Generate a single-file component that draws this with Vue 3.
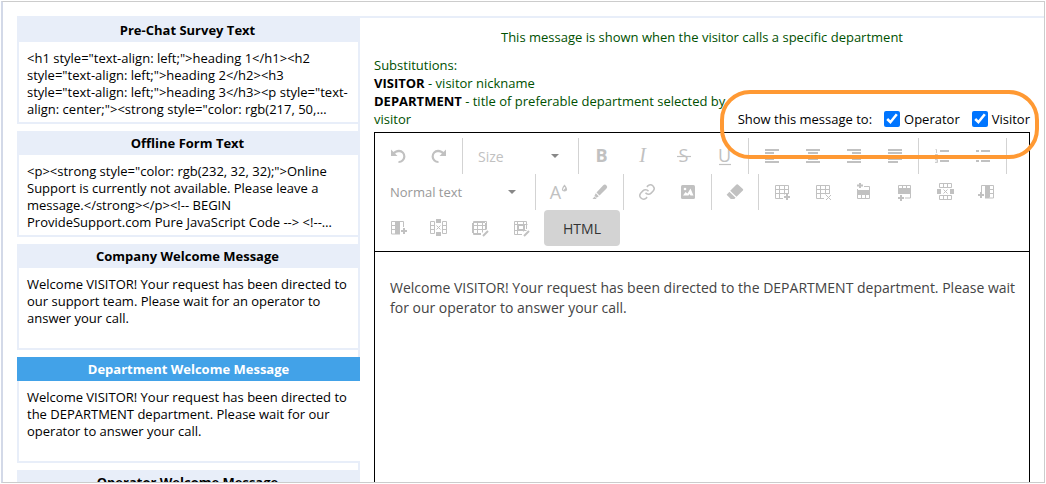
<template>
    <div class="frame">
        <nav class="sidebar">
            <section
                v-for="item in messages"
                :key="item.id"
                class="card"
                :class="{ active: item.id === activeId }"
                @click="activeId = item.id"
            >
                <h3 class="card-title">{{ item.title }}</h3>
                <div class="card-body">{{ item.text }}</div>
            </section>
        </nav>

        <main class="main">
            <p class="intro">This message is shown when the visitor calls a specific department</p>

            <div class="info">
                <div class="substitutions">
                    Substitutions:<br>
                    <b>VISITOR</b> - visitor nickname<br>
                    <b>DEPARTMENT</b> - title of preferable department selected by visitor
                </div>
                <div class="show-to">
                    <span>Show this message to:</span>
                    <label><input v-model="showTo.operator" type="checkbox">Operator</label>
                    <label><input v-model="showTo.visitor" type="checkbox">Visitor</label>
                    <div class="highlight"></div>
                </div>
            </div>

            <div class="editor">
                <div class="toolbar">
                    <div class="group">
                        <button class="tool" title="Undo">
                            <svg viewBox="0 0 21 20">
                                <path class="fill" d="M4 3.500v6.500h6.500z" />
                                <path class="thick" d="M6 8C8 5.500 10 4.800 12 4.800A5.500 5.500 0 0 1 11.500 16" />
                            </svg>
                        </button>
                        <button class="tool" title="Redo">
                            <svg viewBox="0 0 21 20">
                                <path class="fill" d="M18 3.500v6.500h-6.500z" />
                                <path class="thick" d="M16 8C14 5.500 12 4.800 10 4.800A5.500 5.500 0 0 0 10.500 16" />
                            </svg>
                        </button>
                    </div>

                    <div class="group">
                        <span class="picker size">
                            <select v-model="size" aria-label="Font size">
                                <option>Size</option>
                                <option>Small</option>
                                <option>Large</option>
                            </select>
                            <svg class="caret" viewBox="0 0 8 4"><path d="M0 0h8l-4 4z" /></svg>
                        </span>
                    </div>

                    <div class="group">
                        <button class="tool" title="Bold">
                            <svg viewBox="0 0 21 20"><text class="sans bold" x="10.500" y="16">B</text></svg>
                        </button>
                        <button class="tool" title="Italic">
                            <svg viewBox="0 0 21 20"><text class="serif" x="10.500" y="16">I</text></svg>
                        </button>
                        <button class="tool" title="Strikethrough">
                            <svg viewBox="0 0 21 20">
                                <text class="sans" x="10.500" y="16">S</text>
                                <path class="thin" d="M4 10.500h14" />
                            </svg>
                        </button>
                        <button class="tool" title="Underline">
                            <svg viewBox="0 0 21 20">
                                <text class="sans" x="10.500" y="16">U</text>
                                <path class="thin" d="M5 18.500h12" />
                            </svg>
                        </button>
                    </div>

                    <div class="group">
                        <button v-for="a in aligns" :key="a.name" class="tool" :title="a.name">
                            <svg viewBox="0 0 21 20"><path class="bar" :d="a.path" /></svg>
                        </button>
                    </div>

                    <div class="group">
                        <button class="tool" title="Ordered list">
                            <svg viewBox="0 0 21 20">
                                <path class="bar" d="M9 5h9M9 10h9M9 15h9" />
                                <path class="digits" d="M4.500 3.500h1v3.500M4 8.500h2.500v1.500H4.500v1.500h2.500M4 13.500h2.500v3H4M4.500 15h2" />
                            </svg>
                        </button>
                        <button class="tool" title="Bullet list">
                            <svg viewBox="0 0 21 20">
                                <path class="bar" d="M9 5h9M9 10h9M9 15h9M4 5h3M4 10h3M4 15h3" />
                            </svg>
                        </button>
                    </div>

                    <div class="group">
                        <span class="picker format">
                            <select v-model="format" aria-label="Text format">
                                <option>Normal text</option>
                                <option>Heading 1</option>
                                <option>Heading 2</option>
                            </select>
                            <svg class="caret" viewBox="0 0 8 4"><path d="M0 0h8l-4 4z" /></svg>
                        </span>
                    </div>

                    <div class="group">
                        <button class="tool" title="Text color">
                            <svg viewBox="0 0 21 20">
                                <text class="sans" x="7.500" y="17">A</text>
                                <path class="thin" d="M16.500 3.500c-3 3.500-2.500 5.500 0 5.500s3-2 0-5.500z" />
                                <path class="fill" d="M16.500 9c2 0 2.500-2 1.500-3.500L15 8.500z" />
                            </svg>
                        </button>
                        <button class="tool" title="Highlight">
                            <svg viewBox="0 0 21 20">
                                <path class="fill" d="M14 3.500Q16 1.500 17.500 3.500 19 5 17.500 6.500L10.500 13.500 7.500 10.500zM6.800 11.300l3 3-2.300 1.500-2-2zM3.500 17l2-2.500 2 2-.5.500z" />
                            </svg>
                        </button>
                    </div>

                    <div class="group">
                        <button class="tool" title="Link">
                            <svg viewBox="0 0 21 20">
                                <g transform="translate(2 1) scale(.75)">
                                    <path class="link" d="M10 13a5 5 0 0 0 7.500.500l3-3a5 5 0 0 0-7-7l-1.700 1.700M14 11a5 5 0 0 0-7.500-.500l-3 3a5 5 0 0 0 7 7l1.700-1.700" />
                                </g>
                            </svg>
                        </button>
                        <button class="tool" title="Image">
                            <svg viewBox="0 0 21 20">
                                <rect class="fill" x="4" y="3" width="14" height="14" rx="1.500" />
                                <circle class="hole" cx="8" cy="7" r="1.300" />
                                <path class="hole" d="M6 13.500l2.500-3.500 2 1.500 3-5 3 7h-3l-1-1.500-1 1.500z" />
                            </svg>
                        </button>
                    </div>

                    <div class="group">
                        <button class="tool" title="Clear formatting">
                            <svg viewBox="0 0 21 20">
                                <path class="fill" d="M12.500 2.500q.700-.700 1.400 0l5 4.500q.700.700 0 1.400L12.500 14.800 6.200 8.800zM5.400 9.700l6.200 6-1.300 1.300H6.800L2.600 12.800z" />
                            </svg>
                        </button>
                    </div>

                    <button v-for="t in tableTools" :key="t.name" class="tool" :title="t.name">
                        <svg viewBox="0 0 21 20">
                            <path class="grid" :d="t.lines" />
                            <path v-if="t.solid" class="fill" :d="t.solid" />
                            <path v-if="t.mark" class="mark" :d="t.mark" />
                        </svg>
                    </button>

                    <button class="html">HTML</button>
                </div>

                <textarea v-model="content" class="content" aria-label="Message text" spellcheck="false"></textarea>
            </div>
        </main>
    </div>
</template>

<script setup>
import { ref, reactive } from 'vue'

const messages = [
    {
        id: 1,
        title: 'Pre-Chat Survey Text',
        text: '<h1 style="text-align: left;">heading 1</h1><h2 style="text-align: left;">heading 2</h2><h3 style="text-align: left;">heading 3</h3><p style="text-align: center;"><strong style="color: rgb(217, 50,…'
    },
    {
        id: 2,
        title: 'Offline Form Text',
        text: '<p><strong style="color: rgb(232, 32, 32);">Online Support is currently not available. Please leave a message.</strong></p><!-- BEGIN ProvideSupport.com Pure JavaScript Code --> <!--…'
    },
    {
        id: 3,
        title: 'Company Welcome Message',
        text: 'Welcome VISITOR! Your request has been directed to our support team. Please wait for an operator to answer your call.'
    },
    {
        id: 4,
        title: 'Department Welcome Message',
        text: 'Welcome VISITOR! Your request has been directed to the DEPARTMENT department. Please wait for our operator to answer your call.'
    },
    { id: 5, title: 'Operator Welcome Message', text: '' }
]

const activeId = ref(4)
const showTo = reactive({ operator: true, visitor: true })
const size = ref('Size')
const format = ref('Normal text')
const content = ref('Welcome VISITOR! Your request has been directed to the DEPARTMENT department. Please wait for our operator to answer your call.')

const aligns = [
    { name: 'Align left', path: 'M4 4h14M4 7h9M4 10h14M4 13h9M4 16h14' },
    { name: 'Align center', path: 'M4 4h14M6 7h10M4 10h14M6 13h10M4 16h14' },
    { name: 'Align right', path: 'M4 4h14M9 7h9M4 10h14M9 13h9M4 16h14' },
    { name: 'Justify', path: 'M4 4h14M4 7h14M4 10h14M4 13h14M4 16h10' }
]

// Table buttons: thin grid lines, solid cells and the plus / cross / pencil mark
const tableTools = [
    {
        name: 'Insert table',
        lines: 'M12 16.500H4.500v-13h13V12M4.500 7.500h13M4.500 11.500h13M8.500 3.500v13M13.500 3.500v9',
        mark: 'M16 12v6M13 15h6'
    },
    {
        name: 'Delete table',
        lines: 'M12 16.500H4.500v-13h13V12M4.500 7.500h13M4.500 11.500h13M8.500 3.500v13M13.500 3.500v9M14 13l5 5M19 13l-5 5'
    },
    {
        name: 'Insert row above',
        lines: 'M11 4.500h5.500V8M4.500 7v9.500h12V8M4.500 12.500h12M8.500 12.500v4M12.500 12.500v4',
        solid: 'M4 8h13v5H4z',
        mark: 'M7 1v5M4 3.500h6'
    },
    {
        name: 'Insert row below',
        lines: 'M4.500 12V3.500h12v12.500H11M4.500 6.500h12M8.500 3.500v4M12.500 3.500v4',
        solid: 'M4 7h13v5H4z',
        mark: 'M7 13v6M4 16h6'
    },
    {
        name: 'Delete row',
        lines: 'M4.500 1.500h12v4h-12zM8.500 1.500v4M12.500 1.500v4M4.500 13.500h12v4h-12zM8.500 13.500v4M12.500 13.500v4M8.500 7.500l4 4M12.500 7.500l-4 4',
        solid: 'M2 7h4v5H2zM15 7h4v5h-4z'
    },
    {
        name: 'Insert column left',
        lines: 'M5.500 10V3.500h12v12.500H9M13.500 3.500v12M13.500 7.500h4M13.500 11.500h4',
        solid: 'M9 3h4v13H9z',
        mark: 'M5 10v6M2 13h6'
    },
    {
        name: 'Insert column right',
        lines: 'M16.500 9V3.500h-12v12.500H13M8.500 3.500v12M4.500 7.500h4M4.500 11.500h4',
        solid: 'M8 3h5v13H8z',
        mark: 'M17 10v6M14 13h6'
    },
    {
        name: 'Delete column',
        lines: 'M2.500 3.500h4v12h-4zM2.500 7.500h4M2.500 11.500h4M14.500 3.500h4v12h-4zM14.500 7.500h4M14.500 11.500h4M8.500 7.500l4 4M12.500 7.500l-4 4',
        solid: 'M8 1h5v4H8zM8 14h5v4H8z'
    },
    {
        name: 'Table properties',
        lines: 'M12 16.500H4.500v-13h13V11M4.500 7.500h13M4.500 11.500h13M8.500 3.500v13M13.500 3.500v11',
        solid: 'M3 3h15v2H3zM3 3h2v14H3zM3 15h9v2H3zM16 3h2v8h-2z',
        mark: 'M14 18l5-5'
    },
    {
        name: 'Cell properties',
        lines: 'M12 16.500H4.500v-13h12V11M4.500 6.500h13M4.500 12.500h12M7.500 3.500v13M13.500 3.500v10',
        solid: 'M7 6v7h8V6zM9 8h4v3H9z',
        mark: 'M14 18l5-5'
    }
]
</script>

<style>
body {
    margin: 0;
    background: #fff;
}
</style>

<style scoped>
* {
    box-sizing: border-box;
}

.frame {
    display: flex;
    height: calc(100vh - 2px);
    margin: 1px;
    padding: 14px 0 0 14px;
    border: 1px solid #ccc;
    border-left: 2px solid #d3d9e8;
    overflow: hidden;
    font-family: "Open Sans", "Noto Sans", sans-serif;
    font-size: 13px;
    color: #000;
}

.sidebar {
    display: flex;
    flex-direction: column;
    flex: 0 0 343px;
    height: max-content;
    gap: 7px;
    border-top: 2px solid #e8eef9;
    border-right: 2px solid #e8eef9;
}

.card {
    border: solid #e8eef9;
    border-width: 0 0 2px 2px;
    background: #fff;
    cursor: pointer;
}

.card-title {
    margin: 0 0 0 -2px;
    background: #e8eef9;
    font-size: 13px;
    font-weight: 700;
    line-height: 24px;
    text-align: center;
}

.card-body {
    height: 80px;
    padding: 8px;
    line-height: 17px;
}

.active {
    margin-right: -2px;
}

.active .card-title {
    background: #42a2e8;
    color: #fff;
}

.main {
    flex: 1;
    min-width: 0;
    display: flex;
    flex-direction: column;
    padding: 10px 14px 0;
    border-top: 2px solid #e8eef9;
    line-height: 18px;
}

.intro {
    margin: 0 0 10px;
    text-align: center;
    color: #005000;
}

.info {
    display: flex;
    align-items: flex-end;
    gap: 8px;
    margin-bottom: 4px;
}

.substitutions {
    flex: 1;
    color: #005000;
}

.substitutions b {
    color: #000;
}

.show-to {
    position: relative;
    display: flex;
    gap: 12px;
    white-space: nowrap;
}

.show-to label {
    display: flex;
    align-items: center;
    gap: 4px;
}

.show-to input {
    width: 16px;
    height: 16px;
    margin: 0;
    accent-color: #0075ff;
}

.highlight {
    position: absolute;
    inset: -20px -9px -31px -18px;
    border: 4px solid #ff9933;
    border-radius: 30px;
    pointer-events: none;
}

.editor {
    flex: 1;
    display: flex;
    flex-direction: column;
    border: 1px solid #000;
    border-bottom: 0;
}

.toolbar {
    display: flex;
    flex-wrap: wrap;
    padding: 5px 2px;
    border-bottom: 1px solid #000;
}

.group {
    display: flex;
    margin-right: 2px;
    padding-right: 3px;
    border-right: 1px solid #d3d3d3;
}

.tool {
    width: 41px;
    height: 36px;
    padding: 8px 10px;
    border: 0;
    background: none;
}

.tool svg {
    display: block;
    width: 21px;
    height: 20px;
    fill: none;
    stroke: none;
    overflow: visible;
}

.tool .fill {
    fill: #c1c1c1;
    fill-rule: evenodd;
}

.tool .hole {
    fill: #fff;
}

.tool .thick {
    stroke: #c1c1c1;
    stroke-width: 2.2;
}

.tool .thin {
    stroke: #c1c1c1;
    stroke-width: 1.2;
}

.tool .bar {
    stroke: #c1c1c1;
    stroke-width: 1.8;
}

.tool .digits {
    stroke: #c1c1c1;
    stroke-width: 0.8;
}

.tool .link {
    stroke: #c1c1c1;
    stroke-width: 2;
}

.tool .grid {
    stroke: #c1c1c1;
}

.tool .mark {
    stroke: #c1c1c1;
    stroke-width: 2;
}

.tool text {
    fill: #c1c1c1;
    font-family: "Open Sans", sans-serif;
    font-size: 18px;
    text-anchor: middle;
}

.tool .bold {
    font-weight: 700;
}

.tool .serif {
    font-family: "Liberation Serif", serif;
    font-size: 20px;
    font-style: italic;
}

.picker {
    position: relative;
}

.picker select {
    width: 100%;
    height: 36px;
    padding: 0 13px;
    border: 0;
    background: none;
    appearance: none;
    font: 14px "Open Sans", sans-serif;
    color: #c1c1c1;
}

.size {
    width: 110px;
}

.format {
    width: 155px;
}

.format select {
    font-size: 13px;
    color: #999;
}

.caret {
    position: absolute;
    top: 16px;
    right: 16px;
    width: 8px;
    height: 4px;
    fill: #888;
    pointer-events: none;
}

.html {
    height: 36px;
    width: 76px;
    margin-left: 3px;
    padding: 0;
    border: 0;
    border-radius: 4px;
    background: #d3d3d3;
    font: 14px "Open Sans", sans-serif;
    color: #333;
}

.content {
    display: block;
    flex: 1;
    width: 100%;
    padding: 26px 8px 0 15px;
    border: 0;
    outline: 0;
    resize: none;
    background: #fff;
    font: 14px/20px "Open Sans", sans-serif;
    color: #444;
}
</style>
